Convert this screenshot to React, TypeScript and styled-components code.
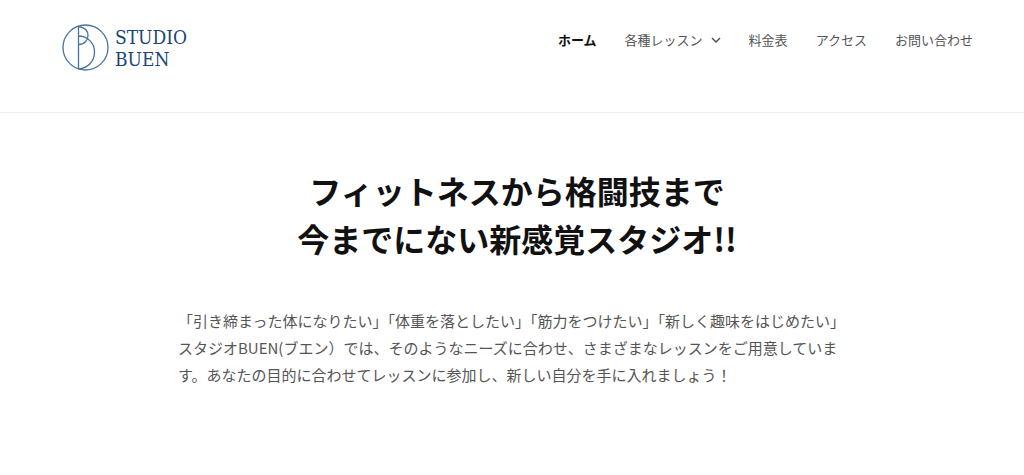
import React from "react";
import styled, { createGlobalStyle } from "styled-components";

const GlobalStyle = createGlobalStyle`
  * { box-sizing: border-box; }
  body {
    margin: 0;
    background: #fff;
    color: #555;
    font-family: "Noto Sans CJK JP", sans-serif;
    font-size: 15px;
    line-height: 27px;
  }
`;

const Header = styled.header`
  display: flex;
  justify-content: space-between;
  align-items: flex-start;
  padding: 24px 51px 41px 62px;
  border-bottom: 1px solid #eee;
`;

const Brand = styled.a`
  display: flex;
  align-items: center;
  gap: 6px;
  color: #1a4577;
  text-decoration: none;
`;

const BrandName = styled.span`
  font-family: "DejaVu Serif Condensed", "DejaVu Serif", serif;
  font-size: 19px;
  line-height: 22px;
`;

const NavList = styled.ul`
  display: flex;
  gap: 28px;
  margin: 0;
  padding: 4px 0 0;
  list-style: none;
`;

const NavLink = styled.a<{ $current?: boolean }>`
  display: flex;
  align-items: center;
  gap: 8px;
  color: ${(p) => (p.$current ? "#111" : "#555")};
  font-size: 13px;
  font-weight: ${(p) => (p.$current ? 700 : 400)};
  line-height: 24px;
  text-decoration: none;
  white-space: nowrap;
`;

const Main = styled.main`
  padding: 53px 168px 60px 178px;
`;

const Title = styled.h1`
  margin: 0 0 45px;
  color: #111;
  font-size: 32px;
  font-weight: 700;
  line-height: 48px;
  text-align: center;
`;

const Lead = styled.p`
  max-width: 670px;
  margin: 0;
`;

function LogoMark() {
  return (
    <svg width="47" height="47" viewBox="0 0 47 47" fill="none" stroke="#4a739b" strokeWidth="1.3" aria-hidden="true">
      <circle cx="23.5" cy="23.5" r="22.5" />
      <path d="M16.5 2v43M16.5 2.500c6 1 9.500 4.500 9.500 9s-3.500 9-9.500 9M16.500 12c9 0 16 7 16 16s-6 16-16 17" />
    </svg>
  );
}

const links = [
  { label: "ホーム", current: true },
  { label: "各種レッスン", menu: true },
  { label: "料金表" },
  { label: "アクセス" },
  { label: "お問い合わせ" },
];

export default function App() {
  return (
    <>
      <GlobalStyle />
      <Header>
        <Brand href="#" aria-label="STUDIO BUEN">
          <LogoMark />
          <BrandName>
            STUDIO
            <br />
            BUEN
          </BrandName>
        </Brand>
        <nav>
          <NavList>
            {links.map((l) => (
              <li key={l.label}>
                <NavLink href="#" $current={l.current} aria-current={l.current ? "page" : undefined}>
                  {l.label}
                  {l.menu && (
                    <svg width="10" height="6" viewBox="0 0 10 6" fill="none" stroke="currentColor" strokeWidth="1.5" aria-hidden="true">
                      <path d="M1 1l4 4 4-4" />
                    </svg>
                  )}
                </NavLink>
              </li>
            ))}
          </NavList>
        </nav>
      </Header>
      <Main>
        <Title>
          フィットネスから格闘技まで
          <br />
          今までにない新感覚スタジオ!!
        </Title>
        <Lead>
          「引き締まった体になりたい」「体重を落としたい」「筋力をつけたい」「新しく趣味をはじめたい」
          スタジオBUEN(ブエン）では、そのようなニーズに合わせ、さまざまなレッスンをご用意しています。あなたの目的に合わせてレッスンに参加し、新しい自分を手に入れましょう！
        </Lead>
      </Main>
    </>
  );
}
